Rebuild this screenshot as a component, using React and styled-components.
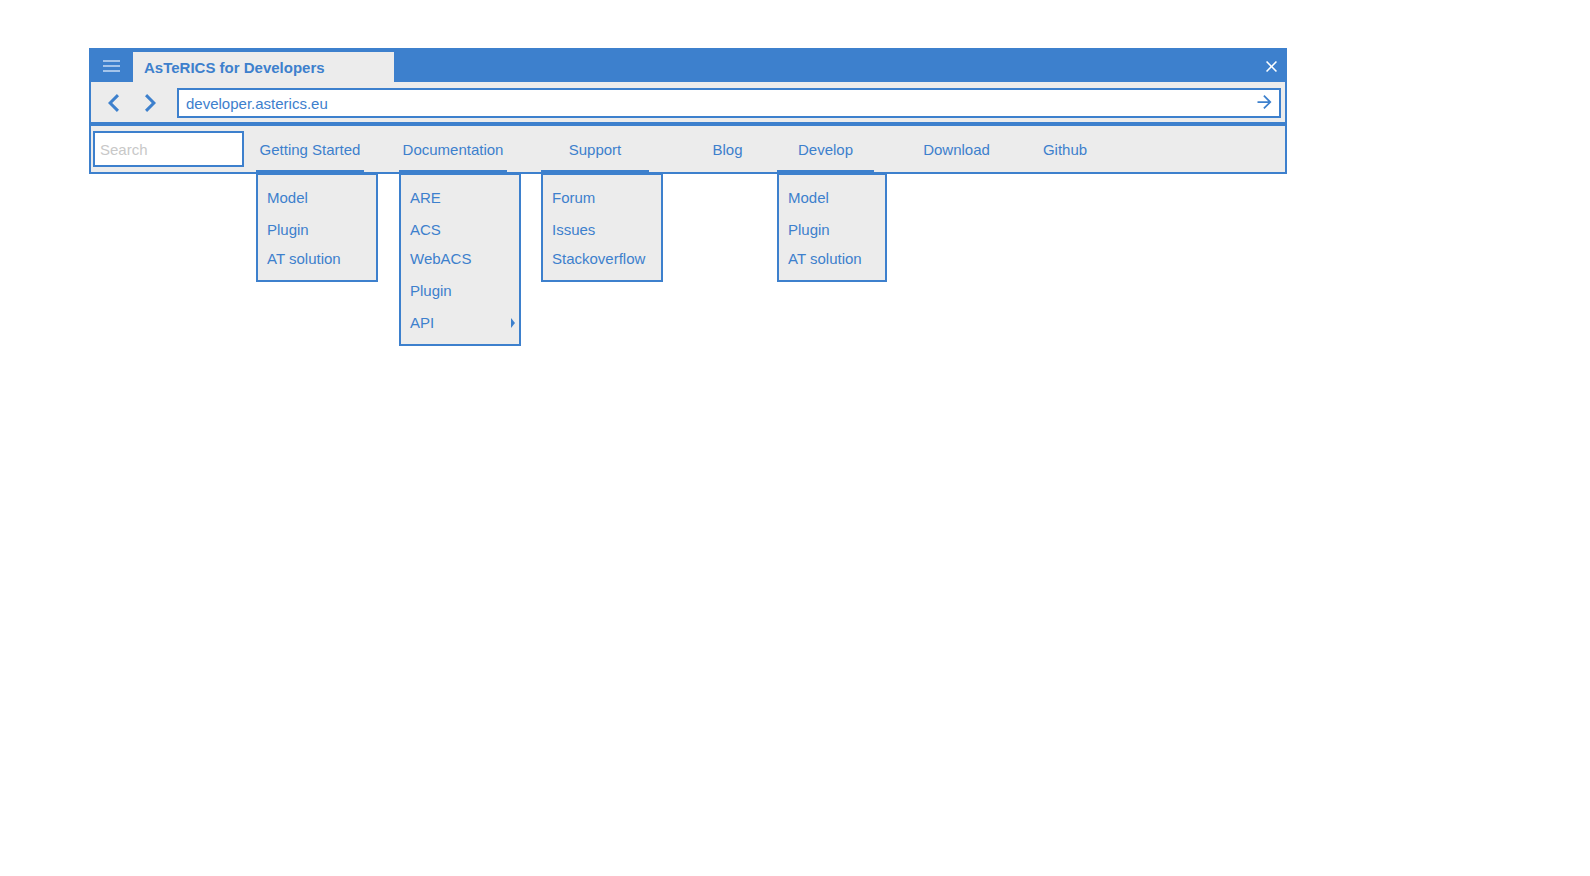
import React from "react";
import styled, { createGlobalStyle } from "styled-components";

const blue = "#3d80cd";
const grey = "#ececec";

const GlobalStyle = createGlobalStyle`
  *, *::before, *::after { box-sizing: border-box; }
  body {
    margin: 0;
    background: #ffffff;
    color: ${blue};
    font: 15px/20px "Liberation Sans", Arial, sans-serif;
  }
`;

const Page = styled.main`
  min-height: 100vh;
  padding: 48px 303px 0 89px;
`;

const Browser = styled.section`
  border: 2px solid ${blue};
  background: ${grey};
`;

const TitleBar = styled.header`
  display: flex;
  align-items: stretch;
  height: 32px;
  background: ${blue};
`;

const IconButton = styled.button`
  display: flex;
  align-items: center;
  justify-content: center;
  width: ${(p) => p.$width}px;
  padding: 0;
  border: 0;
  background: none;
  color: ${(p) => p.$color || blue};
  cursor: pointer;
`;

const GoButton = styled(IconButton)`
  padding-bottom: 2px;
`;

const Tab = styled.h1`
  width: 261px;
  margin: 2px auto 0 2px;
  padding: 6px 11px;
  background: ${grey};
  font-size: 15px;
  line-height: 20px;
  font-weight: bold;
`;

const AddressRow = styled.form`
  display: flex;
  height: 44px;
  padding: 6px 4px 4px;
  border-bottom: 4px solid ${blue};
`;

const History = styled.div`
  display: flex;
  padding-right: 8px;
`;

const AddressBox = styled.div`
  display: flex;
  flex: 1;
  border: 2px solid ${blue};
  background: #ffffff;
`;

const TextInput = styled.input`
  min-width: 0;
  color: inherit;
  font: inherit;
  outline: 0;
  &::placeholder {
    color: #c8c8c8;
    opacity: 1;
  }
`;

const AddressInput = styled(TextInput)`
  flex: 1;
  padding: 2px 7px 0;
  border: 0;
  background: none;
`;

const SearchInput = styled(TextInput)`
  width: 151px;
  height: 36px;
  padding: 0 5px;
  border: 2px solid ${blue};
  background: #ffffff;
`;

const NavBar = styled.nav`
  display: flex;
  align-items: flex-start;
  gap: 12px;
  height: 46px;
  padding: 5px 2px 0;
`;

const NavList = styled.ul`
  display: grid;
  grid-template-columns: 143px 142px 142px 94px 132px 109px 94px;
  height: 41px;
  margin: 0;
  padding: 0;
  list-style: none;
`;

const NavItem = styled.li`
  position: relative;
  width: ${(p) => p.$width}px;
  padding-top: 9px;
  border-bottom: ${(p) => (p.$open ? `2px solid ${blue}` : "0")};
  text-align: center;
`;

const Link = styled.a`
  color: inherit;
  text-decoration: none;
`;

const Menu = styled.ul`
  position: absolute;
  top: 100%;
  left: 0;
  display: grid;
  grid-template-rows: 32px 29px;
  grid-auto-rows: 32px;
  width: ${(p) => p.$width}px;
  margin: 3px 0 0;
  padding: 7px 4px 5px 9px;
  border: 2px solid ${blue};
  background: ${grey};
  text-align: left;
  list-style: none;
`;

const MenuItem = styled.li`
  display: flex;
  align-items: center;
  justify-content: space-between;
  height: 32px;
`;

const sections = [
  { label: "Getting Started", width: 108, menuWidth: 122, items: ["Model", "Plugin", "AT solution"] },
  { label: "Documentation", width: 108, menuWidth: 122, items: ["ARE", "ACS", "WebACS", "Plugin", "API"], nested: "API" },
  { label: "Support", width: 108, menuWidth: 122, items: ["Forum", "Issues", "Stackoverflow"] },
  { label: "Blog", width: 89 },
  { label: "Develop", width: 97, menuWidth: 110, items: ["Model", "Plugin", "AT solution"] },
  { label: "Download", width: 95 },
  { label: "Github", width: 94 },
];

const Icon = ({ w, h, box, d }) => (
  <svg width={w} height={h} viewBox={box} fill="currentColor" aria-hidden="true">
    <path d={d} />
  </svg>
);

const NavEntry = ({ label, width, menuWidth, items, nested }) => (
  <NavItem $width={width} $open={Boolean(items)}>
    <Link href="#">{label}</Link>
    {items && (
      <Menu $width={menuWidth}>
        {items.map((item) => (
          <MenuItem key={item}>
            <Link href="#">{item}</Link>
            {item === nested && <Icon w={4} h={10} box="0 0 4 10" d="M0 0L4 5L0 10z" />}
          </MenuItem>
        ))}
      </Menu>
    )}
  </NavItem>
);

export default function App() {
  return (
    <>
      <GlobalStyle />
      <Page>
        <Browser>
          <TitleBar>
            <IconButton type="button" aria-label="Menu" $width={40} $color="#a4c4ea">
              <Icon w={17} h={12} box="0 0 17 12" d="M0 0h17v2H0zM0 5h17v2H0zM0 10h17v2H0z" />
            </IconButton>
            <Tab>AsTeRICS for Developers</Tab>
            <IconButton type="button" aria-label="Close" $width={27} $color="#ffffff">
              <Icon
                w={11}
                h={11}
                box="5 5 14 14"
                d="M19 6.41L17.59 5 12 10.59 6.41 5 5 6.41 10.59 12 5 17.59 6.41 19 12 13.41 17.59 19 19 17.59 13.41 12z"
              />
            </IconButton>
          </TitleBar>
          <AddressRow onSubmit={(e) => e.preventDefault()}>
            <History>
              <IconButton type="button" aria-label="Back" $width={37}>
                <Icon w={11} h={18} box="8 6 7.41 12" d="M15.41 7.41L14 6l-6 6 6 6 1.41-1.41L10.83 12z" />
              </IconButton>
              <IconButton type="button" aria-label="Forward" $width={37}>
                <Icon w={11} h={18} box="8.59 6 7.41 12" d="M10 6L8.59 7.41 13.17 12l-4.58 4.59L10 18l6-6z" />
              </IconButton>
            </History>
            <AddressBox>
              <AddressInput type="text" aria-label="Address" defaultValue="developer.asterics.eu" />
              <GoButton type="submit" aria-label="Go" $width={29}>
                <Icon
                  w={15}
                  h={14}
                  box="4 4 16 16"
                  d="M12 4l-1.41 1.41L16.17 11H4v2h12.17l-5.58 5.59L12 20l8-8z"
                />
              </GoButton>
            </AddressBox>
          </AddressRow>
          <NavBar aria-label="Main">
            <SearchInput type="text" aria-label="Search" placeholder="Search" />
            <NavList>
              {sections.map((s) => (
                <NavEntry key={s.label} {...s} />
              ))}
            </NavList>
          </NavBar>
        </Browser>
      </Page>
    </>
  );
}
